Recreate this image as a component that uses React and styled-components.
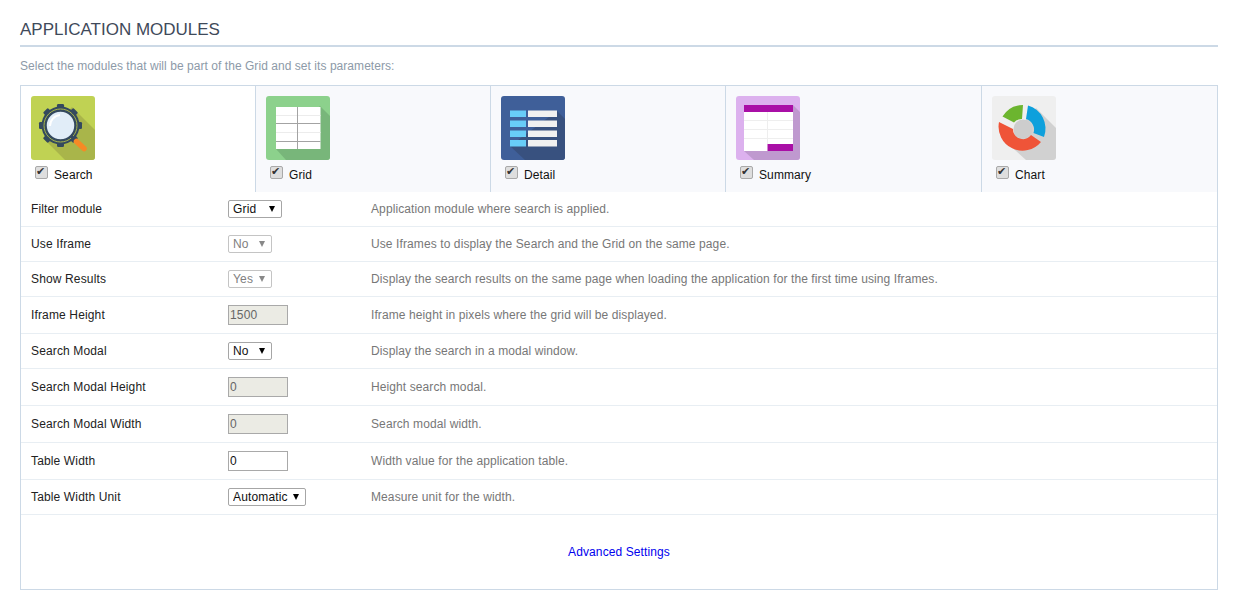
import styled, { createGlobalStyle } from "styled-components"

const GlobalStyle = createGlobalStyle`
    body {
        margin: 0;
        background: #fff;
        font-family: "Liberation Sans", Arial, sans-serif;
        font-size: 12px;
        letter-spacing: 0.1px;
        color: #222;
    }
`

const Page = styled.div`
    padding: 0 20px;
`
const Title = styled.h1`
    margin: 0;
    height: 45px;
    padding: 0;
    line-height: 59px;
    font-size: 17px;
    letter-spacing: 0;
    font-weight: normal;
    color: #3f4a5a;
    border-bottom: 2px solid #ccd9e6;
`
const Intro = styled.p`
    margin: 0;
    height: 38px;
    line-height: 38px;
    letter-spacing: 0.05px;
    color: #8d9aa8;
`
const Panel = styled.div`
    border: 1px solid #ccd9e6;
    height: 503px;
    display: flex;
    flex-direction: column;
`
const Tabs = styled.div`
    display: grid;
    grid-template-columns: 235px 235px 235px 256px 235px;
    height: 106px;
`
const Tab = styled.div`
    box-sizing: border-box;
    padding: 10px 0 0 10px;
    background: ${(props) => (props.$active ? "#fff" : "#f8f9fc")};
    border-right: ${(props) => (props.$last ? "none" : "1px solid #ccd9e6")};
`
const TabLabel = styled.label`
    display: flex;
    align-items: center;
    height: 14px;
    margin-top: 5px;
    padding-left: 4px;
    color: #111;
`
const Check = styled.input`
    appearance: none;
    box-sizing: border-box;
    width: 13px;
    height: 13px;
    margin: -6px 6px 0 0;
    border: 1px solid #a9a9a9;
    border-radius: 2px;
    background: #dedede;
    position: relative;
    &::after {
        content: "✔";
        position: absolute;
        left: 0;
        top: -2px;
        font-family: "DejaVu Sans", sans-serif;
        font-size: 11px;
        line-height: 13px;
        color: #333;
    }
`
const Row = styled.div`
    box-sizing: border-box;
    display: grid;
    grid-template-columns: 197px 143px 1fr;
    align-items: center;
    height: ${(props) => props.$height}px;
    padding: 0 10px;
    border-bottom: 1px solid #e8eef3;
`
const Label = styled.span`
    letter-spacing: 0.14px;
    color: #222;
`
const Help = styled.span`
    color: #777;
`
const SelectBox = styled.span`
    position: relative;
    display: block;
    width: ${(props) => props.$width}px;
    height: 18px;
    &::after {
        content: "";
        position: absolute;
        right: ${(props) => props.$arrowRight}px;
        top: 6px;
        border-style: solid;
        border-width: 6px 3.5px 0 3.5px;
        border-color: ${(props) => (props.$disabled ? "#888" : "#000")} transparent transparent transparent;
    }
`
const Select = styled.select`
    appearance: none;
    box-sizing: border-box;
    display: block;
    width: 100%;
    height: 18px;
    margin: 0;
    padding: 0 0 0 4px;
    border: 1px solid #a6a6a6;
    border-radius: 2px;
    background: #fff;
    font: 12px "Liberation Sans", Arial, sans-serif;
    letter-spacing: 0.15px;
    color: #111;
    &:disabled {
        border-color: #c4c4c4;
        color: #808080;
        opacity: 1;
    }
`
const Field = styled.input`
    box-sizing: border-box;
    display: block;
    width: 60px;
    height: 20px;
    margin: 0;
    padding: 0 1px;
    border: 1px solid #a9a9a9;
    border-radius: 0;
    background: #fff;
    font: 12px "Liberation Sans", Arial, sans-serif;
    letter-spacing: 0.15px;
    color: #111;
    &:disabled {
        background: #ebebe4;
        color: #666;
    }
`
const Footer = styled.div`
    flex: 1;
    display: flex;
    align-items: center;
    justify-content: center;
`
const MoreLink = styled.a`
    color: #0000ee;
    text-decoration: none;
`

const SearchIcon = () => (
    <svg width="64" height="64" viewBox="0 0 64 64">
        <defs>
            <clipPath id="clip-search"><rect width="64" height="64" rx="3" /></clipPath>
        </defs>
        <g clipPath="url(#clip-search)">
            <rect width="64" height="64" fill="#c0d253" />
            <path d="M41 11 L64 34 V64 H34 L12 42 Z" fill="#a9b54a" />
            <circle cx="29.5" cy="29.5" r="19" fill="#34495e" />
            <g fill="#34495e">
                {[0, 45, 90, 135, 180, 225, 270, 315].map((a) => (
                    <rect key={a} x="26" y="8" width="7" height="5" rx="1.2" transform={`rotate(${a} 29.5 29.5)`} />
                ))}
            </g>
            <circle cx="29.5" cy="29.5" r="16.5" fill="none" stroke="#a7b44c" strokeWidth="1" />
            <circle cx="29.5" cy="29.5" r="14.5" fill="#e1edf8" stroke="#34495e" strokeWidth="1.5" />
            <path d="M19 30 A11 11 0 0 1 29 19" fill="none" stroke="#fff" strokeWidth="2" />
            <path d="M40 40 L45 45" stroke="#34495e" strokeWidth="3" />
            <path d="M45.5 45.5 L53 52.5" stroke="#f58a25" strokeWidth="5.5" strokeLinecap="round" />
        </g>
    </svg>
)

const GridIcon = () => (
    <svg width="64" height="64" viewBox="0 0 64 64">
        <defs>
            <clipPath id="clip-grid"><rect width="64" height="64" rx="3" /></clipPath>
        </defs>
        <g clipPath="url(#clip-grid)">
            <rect width="64" height="64" fill="#8cd18c" />
            <path d="M54 10 L64 20 V64 H20 L10 53 Z" fill="#78b67a" />
            <rect x="10" y="11" width="44.5" height="42" fill="#fff" />
            <path d="M10 19.5 H54.5 M10 36.5 H54.5" stroke="#ececec" strokeWidth="1" />
            <path d="M10 27.5 H54.5 M10 45.5 H54.5 M31.5 11 V53" stroke="#a3a3a3" strokeWidth="1" />
        </g>
    </svg>
)

const DetailIcon = () => (
    <svg width="64" height="64" viewBox="0 0 64 64">
        <defs>
            <clipPath id="clip-detail"><rect width="64" height="64" rx="3" /></clipPath>
        </defs>
        <g clipPath="url(#clip-detail)">
            <rect width="64" height="64" fill="#3f5f99" />
            <path d="M56 15 L64 23 V64 H24 L9 50 Z" fill="#38517f" />
            {[14.5, 24.5, 34.5, 44].map((y) => (
                <g key={y}>
                    <rect x="9" y={y} width="16" height="6.5" fill="#68cdf8" />
                    <rect x="27" y={y} width="29" height="6.5" fill="#f0f0f0" />
                </g>
            ))}
        </g>
    </svg>
)

const SummaryIcon = () => (
    <svg width="64" height="64" viewBox="0 0 64 64">
        <defs>
            <clipPath id="clip-summary"><rect width="64" height="64" rx="3" /></clipPath>
        </defs>
        <g clipPath="url(#clip-summary)">
            <rect width="64" height="64" fill="#dcb1ee" />
            <path d="M57 9 L64 16 V64 H18 L8 55 Z" fill="#bf99cf" />
            <rect x="8" y="9" width="49" height="46" fill="#fff" />
            <path d="M8 24.5 H57 M8 33.5 H57 M8 42.5 H57 M31.5 16 V48" stroke="#eeeeee" strokeWidth="1" />
            <rect x="8" y="9" width="49" height="7" fill="#a90fa6" />
            <rect x="31.5" y="48" width="25.5" height="7" fill="#a90fa6" />
        </g>
    </svg>
)

const ChartIcon = () => (
    <svg width="64" height="64" viewBox="0 0 64 64">
        <defs>
            <clipPath id="clip-chart"><rect width="64" height="64" rx="3" /></clipPath>
        </defs>
        <g clipPath="url(#clip-chart)">
            <rect width="64" height="64" fill="#efefef" />
            <path d="M44 12 L64 32 V64 H34 L14 46 Z" fill="#d1d1d1" />
            <circle cx="31" cy="33" r="9.5" fill="#cdcdcd" />
            <path d="M36 9.5 A24 24 0 0 1 52 41 L41.5 37 A11 11 0 0 0 34 23 Z" fill="#0ea0dc" />
            <path d="M10.5 20.5 A24 24 0 0 1 31 9 L30 23 A10 10 0 0 0 22 26.5 Z" fill="#6cb52f" />
            <path d="M49 46 A24 24 0 0 1 7 26 L21 33 A10 10 0 0 0 39 39 Z" fill="#ef5438" />
        </g>
    </svg>
)

const modules = [
    { name: "Search", Icon: SearchIcon, active: true },
    { name: "Grid", Icon: GridIcon },
    { name: "Detail", Icon: DetailIcon },
    { name: "Summary", Icon: SummaryIcon },
    { name: "Chart", Icon: ChartIcon, last: true },
]

const params = [
    { label: "Filter module", height: 35, select: "Grid", width: 54, arrow: 7, help: "Application module where search is applied." },
    { label: "Use Iframe", height: 35, select: "No", width: 44, arrow: 7, disabled: true, help: "Use Iframes to display the Search and the Grid on the same page." },
    { label: "Show Results", height: 35, select: "Yes", width: 44, arrow: 7, disabled: true, help: "Display the search results on the same page when loading the application for the first time using Iframes." },
    { label: "Iframe Height", height: 37, field: "1500", disabled: true, help: "Iframe height in pixels where the grid will be displayed." },
    { label: "Search Modal", height: 35, select: "No", width: 44, arrow: 7, help: "Display the search in a modal window." },
    { label: "Search Modal Height", height: 37, field: "0", disabled: true, help: "Height search modal." },
    { label: "Search Modal Width", height: 37, field: "0", disabled: true, help: "Search modal width." },
    { label: "Table Width", height: 37, field: "0", help: "Width value for the application table." },
    { label: "Table Width Unit", height: 35, select: "Automatic", width: 78, arrow: 7, help: "Measure unit for the width." },
]

const App = () => {
    return (
        <Page>
            <GlobalStyle />
            <Title>APPLICATION MODULES</Title>
            <Intro>Select the modules that will be part of the Grid and set its parameters:</Intro>
            <Panel>
                <Tabs>
                    {modules.map(({ name, Icon, active, last }) => (
                        <Tab key={name} $active={active} $last={last}>
                            <Icon />
                            <TabLabel>
                                <Check type="checkbox" defaultChecked />
                                {name}
                            </TabLabel>
                        </Tab>
                    ))}
                </Tabs>
                {params.map((p) => (
                    <Row key={p.label} $height={p.height}>
                        <Label>{p.label}</Label>
                        {p.select ? (
                            <SelectBox $width={p.width} $arrowRight={p.arrow} $disabled={p.disabled}>
                                <Select disabled={p.disabled} defaultValue={p.select}>
                                    <option>{p.select}</option>
                                </Select>
                            </SelectBox>
                        ) : (
                            <Field defaultValue={p.field} disabled={p.disabled} />
                        )}
                        <Help>{p.help}</Help>
                    </Row>
                ))}
                <Footer>
                    <MoreLink href="#">Advanced Settings</MoreLink>
                </Footer>
            </Panel>
        </Page>
    )
}

export default App
